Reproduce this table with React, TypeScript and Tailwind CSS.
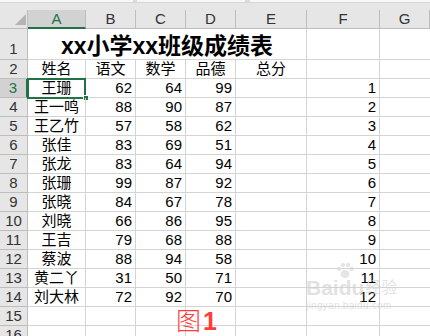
import React from "react";

type Row = [string, number, number, number, number];

const rows: Row[] = [
  ["王珊", 62, 64, 99, 1],
  ["王一鸣", 88, 90, 87, 2],
  ["王乙竹", 57, 58, 62, 3],
  ["张佳", 83, 69, 51, 4],
  ["张龙", 83, 64, 94, 5],
  ["张珊", 99, 87, 92, 6],
  ["张晓", 84, 67, 78, 7],
  ["刘晓", 66, 86, 95, 8],
  ["王吉", 79, 68, 88, 9],
  ["蔡波", 88, 94, 58, 10],
  ["黄二丫", 31, 50, 71, 11],
  ["刘大林", 72, 92, 70, 12],
];

const cols = ["A", "B", "C", "D", "E", "F", "G"];

const gridCols = "grid grid-cols-[28px_58px_50px_50px_50px_71px_73px_50px]";
const base = "h-[19px] border-r border-b border-[#d4d4d4] text-[15px] leading-[18px] whitespace-nowrap";
const cell = `${base} overflow-hidden`;
const rowHead =
  "h-[19px] border-r border-b border-[#bdbdbd] bg-[#e6e6e6] text-[15px] leading-[18px] text-center text-[#333]";

const App = () => {
  return (
    <div
      className="relative w-[430px] h-[336px] overflow-hidden bg-white text-black"
      style={{ fontFamily: '"Liberation Sans", "Noto Sans CJK SC", sans-serif' }}
    >
      {/* formula bar edge */}
      <div className="flex h-[2px] bg-[#f7f7f7]">
        <div className="w-[133px]" />
        <div className="w-[4px] bg-[#dcdcdc]" />
        <div className="w-[108px]" />
        <div className="w-[5px] bg-[#dcdcdc]" />
      </div>
      <div className="h-[8px] bg-[#e6e6e6] border-t border-[#d6d6d6]" />

      {/* column headers */}
      <div className={gridCols}>
        <div className="relative h-[19px] bg-[#e6e6e6] border-r border-b border-[#bdbdbd]">
          <div className="absolute left-[15px] top-[4px] w-0 h-0 border-l-[11px] border-l-transparent border-b-[11px] border-b-[#b4b4b4]" />
        </div>
        {cols.map((c) =>
          c === "A" ? (
            <div
              key={c}
              className="h-[19px] bg-[#d2d2d2] border-r border-[#bdbdbd] border-b-2 border-b-[#217346] text-center text-[15px] leading-[18px] text-[#217346]"
            >
              {c}
            </div>
          ) : (
            <div
              key={c}
              className="h-[19px] bg-[#e6e6e6] border-r border-b border-[#bdbdbd] text-center text-[15px] leading-[18px] text-[#333]"
            >
              {c}
            </div>
          )
        )}
      </div>

      {/* row 1 title */}
      <div className={gridCols}>
        <div className="h-[31px] border-r border-b border-[#bdbdbd] bg-[#e6e6e6] text-[15px] leading-[40px] text-center text-[#333]">
          1
        </div>
        <div className="col-span-5 h-[31px] border-r border-b border-[#d4d4d4] text-center text-[23px] font-bold leading-[34px]">
          xx小学xx班级成绩表
        </div>
        <div className="h-[31px] border-r border-b border-[#d4d4d4]" />
        <div className="h-[31px] border-b border-[#d4d4d4]" />
      </div>

      {/* row 2 headings */}
      <div className={gridCols}>
        <div className={rowHead}>2</div>
        {["姓名", "语文", "数学", "品德", "总分"].map((t) => (
          <div key={t} className={`${cell} text-center`}>
            {t}
          </div>
        ))}
        <div className={cell} />
        <div className={`${cell} border-r-0`} />
      </div>

      {rows.map((r, i) => {
        const n = i + 3;
        return (
          <div key={n} className={gridCols}>
            {n === 3 ? (
              <div className="h-[19px] border-r-2 border-r-[#217346] border-b border-[#bdbdbd] bg-[#d2d2d2] text-[15px] leading-[18px] text-center text-[#217346]">
                {n}
              </div>
            ) : (
              <div className={rowHead}>{n}</div>
            )}
            <div className={`${n === 3 ? base : cell} relative text-center`}>
              {n === 3 && (
                <>
                  <div className="absolute left-[-1px] top-[-1px] w-[59px] h-[21px] border-2 border-[#217346]" />
                  <div className="absolute right-[-4px] bottom-[-4px] w-[6px] h-[6px] bg-[#217346] border border-white" />
                </>
              )}
              {r[0]}
            </div>
            <div className={`${cell} text-right pr-[3px]`}>{r[1]}</div>
            <div className={`${cell} text-right pr-[3px]`}>{r[2]}</div>
            <div className={`${cell} text-right pr-[3px]`}>{r[3]}</div>
            <div className={cell} />
            <div className={`${cell} text-right pr-[3px]`}>{r[4]}</div>
            <div className={`${cell} border-r-0`} />
          </div>
        );
      })}

      {[15, 16].map((n) => (
        <div key={n} className={gridCols}>
          <div className={rowHead}>{n}</div>
          {cols.map((c) => (
            <div key={c} className={`${cell} ${c === "G" ? "border-r-0" : ""}`} />
          ))}
        </div>
      ))}

      {/* caption */}
      <div className="absolute left-[176px] top-[306px] flex items-end text-[#ff3b3b] text-[25px] leading-[30px]">
        <span className="font-light">图</span>
        <span className="font-bold ml-[2px]">1</span>
      </div>

      {/* baidu watermark */}
      <div className="absolute left-[306px] top-[278px] text-[#d0d0d0] opacity-60 pointer-events-none">
        <div className="flex items-end leading-[20px]">
          <span className="text-[21px] font-bold">Bai</span>
          <span className="relative text-[21px] font-bold">
            <svg className="absolute left-[-4px] top-[-16px]" width="20" height="18" viewBox="0 0 20 18">
              <circle cx="4" cy="7" r="2.2" fill="#d4d4d4" />
              <circle cx="8" cy="3" r="2.2" fill="#d4d4d4" />
              <circle cx="13" cy="3" r="2.2" fill="#d4d4d4" />
              <circle cx="16.5" cy="7" r="2.2" fill="#d4d4d4" />
              <ellipse cx="10" cy="12" rx="4.5" ry="4" fill="#d4d4d4" />
            </svg>
            du
          </span>
          <span className="text-[16px] ml-[1px]">经验</span>
        </div>
        <div className="text-[10px] leading-[12px] mt-[2px] tracking-[0.3px]">jingyan.baidu.com</div>
      </div>
    </div>
  );
};

export default App;
